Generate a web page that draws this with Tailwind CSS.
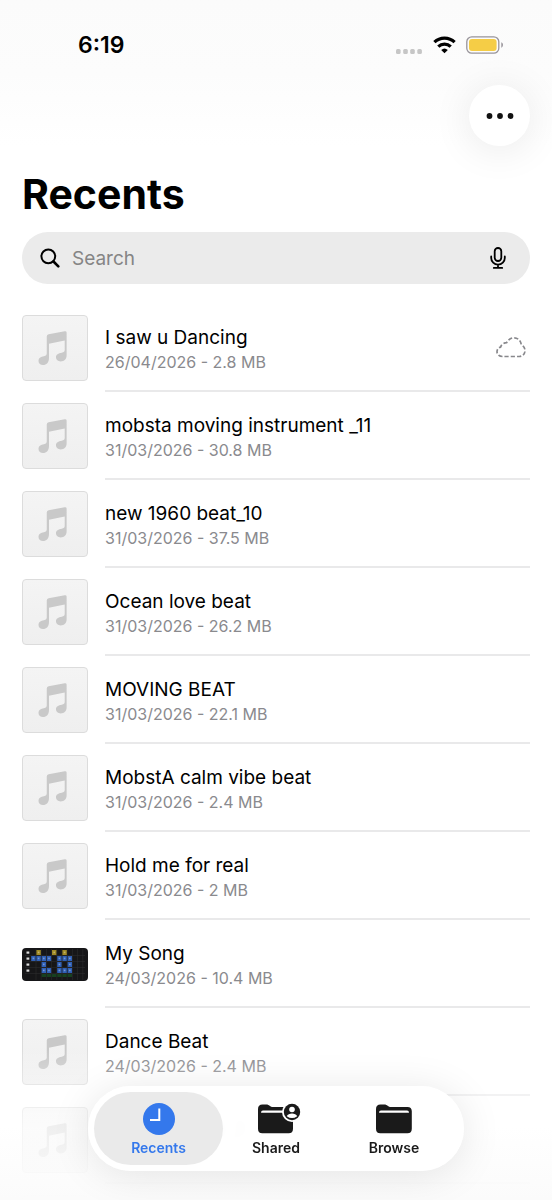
<!DOCTYPE html>
<html lang="en">
<head>
<meta charset="utf-8">
<meta name="viewport" content="width=device-width, initial-scale=1">
<title>Recents</title>
<script src="https://cdn.jsdelivr.net/npm/@tailwindcss/browser@4"></script>
</head>
<body class="bg-white font-['Inter',sans-serif] text-black antialiased">
<svg class="hidden" aria-hidden="true">
  <symbol id="note" viewBox="0 0 66 66">
    <path fill="#c9c9c9" d="M24.5 21.2Q24.5 19.2 26.4 18.8L43 15.7Q45 15.4 45 17.2V40.5C45 44.5 42.5 46.8 38.8 46.8C36 46.8 34 45.200 34 42.600C34 39.500 36.500 38.400 40 37.800C42.200 37.400 43 36.800 43 35V25.300L26.800 28.500V43.500C26.800 47.800 24.200 50.500 20.700 50.500C18 50.500 16 48.800 16 46.300C16 43.300 18.300 42 21.500 41.400C23.800 41 24.500 40.300 24.500 38.500Z"/>
  </symbol>
</svg>
<div class="relative flex h-screen flex-col overflow-hidden">
  <header class="bg-gradient-to-b from-[#fbfbfb] via-[#fcfcfc] to-white">
    <div class="flex h-[85px] items-start justify-between pt-[33px] pr-12 pl-[78px]">
      <time class="text-[23px] leading-6 font-semibold">6:19</time>
      <div class="flex h-6 items-center">
        <svg class="mt-3 mr-[10px] h-[5px] w-[27px]" viewBox="0 0 27 5" fill="#c6c6c6" aria-label="No signal"><rect x="0" width="4.600" height="5" rx="1.500"/><rect x="7.200" width="4.600" height="5" rx="1.500"/><rect x="14.200" width="4.600" height="5" rx="1.500"/><rect x="21.300" width="4.600" height="5" rx="1.500"/></svg>
        <svg class="mr-[10px] h-[18px] w-[23px]" viewBox="0 0 23 18" fill="none" stroke="#000" aria-label="Wi-Fi"><path stroke-width="3.200" d="M1.400 6.200a14.400 14.400 0 0 1 20.200 0"/><path stroke-width="3.200" d="M5.300 10.600a8.800 8.800 0 0 1 12.400 0"/><path fill="#000" stroke="none" d="M11.500 17.200l-3.300-3.200a4.800 4.800 0 0 1 6.600 0z"/></svg>
        <svg class="h-[18px] w-[38px]" viewBox="0 0 38 18" aria-label="Battery"><rect x=".8" y=".8" width="32" height="16.400" rx="5" fill="none" stroke="#98949a" stroke-width="1.300"/><rect x="3" y="3" width="27.600" height="12" rx="3" fill="#f5cd46"/><path fill="#98949a" d="M35.300 6.300c2.200.8 2.200 4.600 0 5.400z"/></svg>
      </div>
    </div>
    <div class="flex justify-end pr-[22px]">
      <button type="button" aria-label="More options" class="flex size-[61px] items-center justify-center rounded-full bg-white shadow-[0_4px_40px_rgba(0,0,0,0.09)]">
        <svg class="h-[6px] w-7" viewBox="0 0 28 6" fill="#111"><circle cx="3.500" cy="3" r="2.900"/><circle cx="14" cy="3" r="2.900"/><circle cx="24.500" cy="3" r="2.900"/></svg>
      </button>
    </div>
  </header>
  <main class="px-[22px]">
    <h1 class="pt-6 text-[41px] leading-[48px] font-bold">Recents</h1>
    <form role="search" class="mt-[14px] flex h-[52px] items-center rounded-full bg-[#ebebeb] pr-6 pl-[18px]">
      <svg class="size-5 shrink-0" viewBox="0 0 20 20" fill="none" stroke="#000" stroke-width="2" stroke-linecap="round"><circle cx="8.300" cy="8.300" r="6.900"/><path stroke-width="2.600" d="M13.500 13.500l4.800 4.800"/></svg>
      <input type="search" aria-label="Search" placeholder="Search" class="ml-3 min-w-0 flex-1 bg-transparent pt-[2px] text-[19px] placeholder:text-[#858585] placeholder:opacity-100 focus:outline-none">
      <button type="button" aria-label="Dictate">
        <svg class="h-[22px] w-4" viewBox="0 0 16 22" fill="none" stroke="#000" stroke-width="1.800" stroke-linecap="round"><rect x="4.700" y="1" width="6.600" height="13" rx="3.300"/><path d="M1.200 9.500v1.400a6.800 6.800 0 0 0 13.600 0V9.500M8 17.700v3M3.800 20.900h8.400"/></svg>
      </button>
    </form>
    <ul id="files" class="mt-5"></ul>
  </main>
  <div class="pointer-events-none absolute inset-x-0 bottom-0 h-[150px] bg-gradient-to-b from-transparent via-white/70 to-[#fbfbfb]"></div>
  <nav aria-label="Tabs" class="absolute inset-x-0 bottom-[29px] mx-auto flex h-[85px] w-[376px] rounded-full bg-white/90 p-[6px] text-[14px] leading-4 font-semibold text-[#1a1a1a] shadow-[0_4px_40px_rgba(0,0,0,0.10)] backdrop-blur-xs">
    <a href="#recents" aria-current="page" class="flex w-[129px] flex-col items-center rounded-full bg-[#e9e9e9]/95 pt-[11px] text-[#3478ec]">
      <svg class="size-8" viewBox="0 0 32 32"><circle cx="16" cy="16" r="16" fill="currentColor"/><path d="M16.300 5.500v11.500H7" fill="none" stroke="#fff" stroke-width="2"/></svg>
      <span class="mt-[5px]">Recents</span>
    </a>
    <a href="#shared" class="-ml-[6px] flex w-[118px] flex-col items-center pt-[11px]">
      <svg class="h-8 w-9 overflow-visible" viewBox="4 0 36 32" fill="#1a1a1a"><path d="M4 6.200C4 3 5.500 1.500 8.500 1.500h3.700c3.400 0 3.600 2.500 6.600 2.500H35c2.500 0 4 1.500 4 4.300v17.500c0 3-1.500 4.500-4.300 4.500H8.300C5.500 30.300 4 28.800 4 25.800z"/><path fill="#fff" d="M9 7.500h25.500q2 0 2 2.300H7q0-2.300 2-2.300z"/><circle cx="38" cy="9" r="10" fill="#fff"/><circle cx="38" cy="9" r="8.200"/><circle cx="38" cy="6.500" r="2.800" fill="#fff"/><path fill="#fff" d="M32.800 13.200c1.500-3.600 8.900-3.600 10.400 0q-5.200 3.800-10.400 0z"/></svg>
      <span class="mt-[5px]">Shared</span>
    </a>
    <a href="#browse" class="flex w-[118px] flex-col items-center pt-[11px]">
      <svg class="h-8 w-9" viewBox="0 0 36 32" fill="#1a1a1a"><path d="M0 6.200C0 3 1.500 1.500 4.500 1.500h3.700c3.400 0 3.600 2.500 6.600 2.500H31.500c2.800 0 4.300 1.500 4.300 4.300v17.500c0 3-1.500 4.500-4.300 4.500H4.300C1.500 30.300 0 28.800 0 25.800z"/><path fill="#fff" d="M5 7.500h26q2 0 2 2.300H3q0-2.300 2-2.300z"/></svg>
      <span class="mt-[5px]">Browse</span>
    </a>
  </nav>
</div>
<script>
const files = [
  ["I saw u Dancing", "26/04/2026 - 2.8 MB", "cloud"],
  ["mobsta moving instrument _11", "31/03/2026 - 30.8 MB"],
  ["new 1960 beat_10", "31/03/2026 - 37.5 MB"],
  ["Ocean love beat", "31/03/2026 - 26.2 MB"],
  ["MOVING BEAT", "31/03/2026 - 22.1 MB"],
  ["MobstA calm vibe beat", "31/03/2026 - 2.4 MB"],
  ["Hold me for real", "31/03/2026 - 2 MB"],
  ["My Song", "24/03/2026 - 10.4 MB", "grid"],
  ["Dance Beat", "24/03/2026 - 2.4 MB"],
  ["Massive beat _1", ""],
  ["", ""]
];
const cloud = `<svg class="mr-1 h-[22px] w-[30px] shrink-0 overflow-visible" viewBox="0 0 30 22" fill="none" stroke="#88888c" stroke-width="1.700" stroke-dasharray="4.200 2.100" aria-label="In cloud"><path d="M6.500 20.500C3.200 20.500 1 18.400 1 15.800c0-2.400 1.400-4 3.600-4.700C5.200 8.600 7.800 6.800 10.600 6.700 12.300 3.600 15 1.800 18 1.800c3.900 0 6.700 2.700 7.300 7 2.400 1.200 3.700 3.300 3.700 5.800 0 3.400-2.400 5.900-5.800 5.900z"/></svg>`;
const cells = { "#a08a25": [[3,0],[6,0],[8,0]], "#2f5fb5": [[2,1],[3,1],[4,1],[5,1],[7,1],[8,1],[9,1],[4,2],[7,2],[9,2],[4,3],[5,3],[7,3],[8,3],[9,3]], "#17401f": [[4,4],[5,4],[6,4],[7,4],[8,4],[9,4]] };
let g = "";
for (let x = 14; x < 64; x += 5.2) g += `<path d="M${x} 1V32" stroke="#2b2b2d" stroke-width=".6"/>`;
for (let y = 7.5; y < 31; y += 6) g += `<path d="M3 ${y}H63" stroke="#2b2b2d" stroke-width=".6"/>`;
for (const c in cells) for (const [x, y] of cells[c]) g += `<rect x="${-1.200 + x * 5.200}" y="${2 + y * 6}" width="4.400" height="${y == 4 ? 3 : 5}" fill="${c}"/>` + (y < 4 ? `<rect x="${.2 + x * 5.200}" y="${3.600 + y * 6}" width="1.600" height="1.600" fill="#fff" opacity=".35"/>` : "");
for (let i = 0; i < 4; i++) g += `<rect x="4.500" y="${3.500 + i * 6}" width="2.800" height="2.200" fill="#ddd"/>`;
const grid = `<svg class="h-[33px] w-[66px] shrink-0" viewBox="0 0 66 33"><rect width="66" height="33" rx="4" fill="#161618"/>${g}</svg>`;
const note = `<svg class="size-[66px] shrink-0 rounded-[4px] border border-[#dcdcdc] bg-gradient-to-b from-[#f4f4f4] to-[#efefef]" viewBox="0 0 66 66"><use href="#note"/></svg>`;
document.getElementById("files").innerHTML = files.map(([n, d, k]) => `<li class="flex h-[88px] items-center gap-[17px]">${k == "grid" ? grid : note}<div class="flex h-full min-w-0 flex-1 items-center border-b-2 border-[#e9e9ea]"><div class="min-w-0 flex-1 pt-[5px]"><p class="truncate text-[19px] leading-6">${n}</p><p class="h-6 text-[16px] leading-6 text-[#8a8a8e]">${d}</p></div>${k == "cloud" ? cloud : ""}</div></li>`).join("");
</script>
</body>
</html>
